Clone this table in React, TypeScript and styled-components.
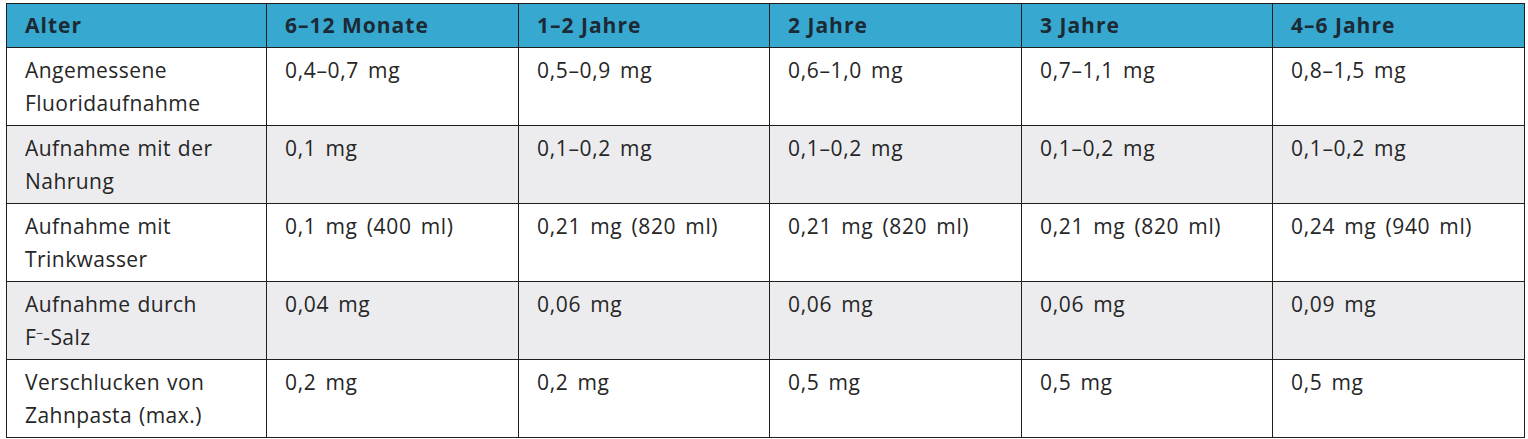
import React from "react";
import styled, { createGlobalStyle } from "styled-components";

const Global = createGlobalStyle`
  html, body { margin: 0; padding: 0; background: #ffffff; }
  body { font-family: "Open Sans", "Noto Sans", sans-serif; }
`;

const Page = styled.div`
  padding: 3px 5px 0 6px;
`;

const Table = styled.table`
  border-collapse: collapse;
  table-layout: fixed;
  width: 1518px;
  font-family: "Open Sans", "Noto Sans", sans-serif;
  font-size: 21px;
  line-height: 33px;
  color: #262626;
`;

const HeadCell = styled.th`
  background: #37a8cf;
  color: #1c2a35;
  font-weight: 700;
  text-align: left;
  letter-spacing: 1px;
  padding: 5px 18px 5px 18px;
  border: 1px solid #1f1f1f;
  vertical-align: top;
`;

const Row = styled.tr<{ $shaded: boolean }>`
  background: ${(p) => (p.$shaded ? "#ececee" : "#ffffff")};
`;

const Cell = styled.td<{ $label?: boolean }>`
  padding: 6px 18px 5px 18px;
  border: 1px solid #1f1f1f;
  vertical-align: top;
  font-weight: 400;
  white-space: nowrap;
  letter-spacing: ${(p) => (p.$label ? "0.45px" : "0.65px")};
  word-spacing: ${(p) => (p.$label ? "1px" : "3px")};
`;

const Sup = styled.sup`
  font-size: 12px;
  line-height: 0;
  vertical-align: 7px;
  letter-spacing: 0;
`;

const widths = [260, 252, 251, 252, 251, 252];
const heads = ["Alter", "6–12 Monate", "1–2 Jahre", "2 Jahre", "3 Jahre", "4–6 Jahre"];

type RowData = { label: React.ReactNode; values: string[] };

const rows: RowData[] = [
  {
    label: (
      <>
        Angemessene
        <br />
        Fluoridaufnahme
      </>
    ),
    values: ["0,4–0,7 mg", "0,5–0,9 mg", "0,6–1,0 mg", "0,7–1,1 mg", "0,8–1,5 mg"],
  },
  {
    label: (
      <>
        Aufnahme mit der
        <br />
        Nahrung
      </>
    ),
    values: ["0,1 mg", "0,1–0,2 mg", "0,1–0,2 mg", "0,1–0,2 mg", "0,1–0,2 mg"],
  },
  {
    label: (
      <>
        Aufnahme mit
        <br />
        Trinkwasser
      </>
    ),
    values: [
      "0,1 mg (400 ml)",
      "0,21 mg (820 ml)",
      "0,21 mg (820 ml)",
      "0,21 mg (820 ml)",
      "0,24 mg (940 ml)",
    ],
  },
  {
    label: (
      <>
        Aufnahme durch
        <br />
        F<Sup>−</Sup>-Salz
      </>
    ),
    values: ["0,04 mg", "0,06 mg", "0,06 mg", "0,06 mg", "0,09 mg"],
  },
  {
    label: (
      <>
        Verschlucken von
        <br />
        Zahnpasta (max.)
      </>
    ),
    values: ["0,2 mg", "0,2 mg", "0,5 mg", "0,5 mg", "0,5 mg"],
  },
];

export default function App() {
  return (
    <>
      <Global />
      <Page>
        <Table>
          <colgroup>
            {widths.map((w, i) => (
              <col key={i} style={{ width: w }} />
            ))}
          </colgroup>
          <thead>
            <tr>
              {heads.map((h) => (
                <HeadCell key={h}>{h}</HeadCell>
              ))}
            </tr>
          </thead>
          <tbody>
            {rows.map((r, i) => (
              <Row key={i} $shaded={i % 2 === 1}>
                <Cell $label>{r.label}</Cell>
                {r.values.map((v, j) => (
                  <Cell key={j}>{v}</Cell>
                ))}
              </Row>
            ))}
          </tbody>
        </Table>
      </Page>
    </>
  );
}
